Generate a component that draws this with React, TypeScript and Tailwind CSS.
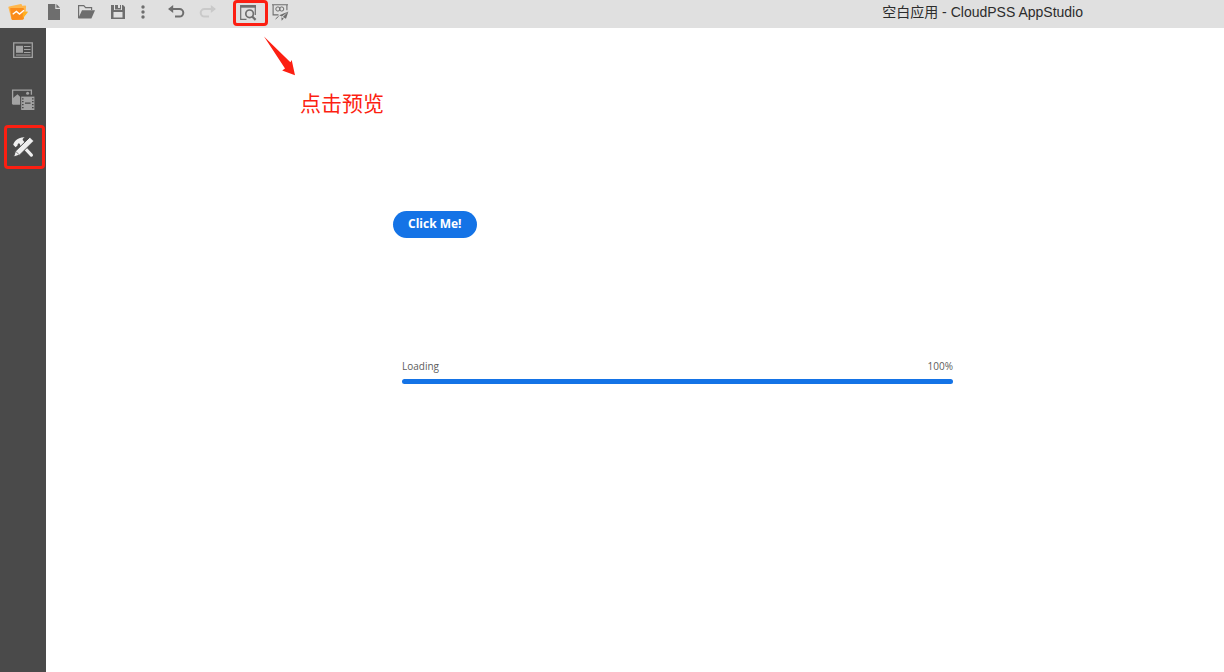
import type { ReactNode } from "react";

function Glyph({ children }: { children: ReactNode }) {
  return (
    <svg viewBox="0 0 24 24" className="size-6 shrink-0" fill="none" aria-hidden="true">
      {children}
    </svg>
  );
}

function ToolButton({
  label,
  children,
  highlighted = false,
  disabled = false,
  narrow = false,
}: {
  label: string;
  children: ReactNode;
  highlighted?: boolean;
  disabled?: boolean;
  narrow?: boolean;
}) {
  return (
    <button
      type="button"
      aria-label={label}
      disabled={disabled}
      className={`relative flex h-7 items-center justify-center ${narrow ? "w-[18px]" : "w-8"} ${
        disabled ? "text-[#c9c9c9]" : "text-[#6e6e6e]"
      }`}
    >
      <Glyph>{children}</Glyph>
      {highlighted && (
        <span className="absolute -right-1 bottom-0.5 left-px top-0 rounded-[4px] border-3 border-[#fc1f12]" />
      )}
    </button>
  );
}

function SideButton({
  label,
  children,
  highlighted = false,
}: {
  label: string;
  children: ReactNode;
  highlighted?: boolean;
}) {
  return (
    <button
      type="button"
      aria-label={label}
      aria-pressed={highlighted}
      className={`relative flex h-11 w-full items-center justify-center ${
        highlighted ? "text-[#efefef]" : "text-[#a3a3a3]"
      }`}
    >
      <Glyph>{children}</Glyph>
      {highlighted && (
        <span className="absolute -bottom-px left-1 right-px top-px rounded-[4px] border-3 border-[#fc1f12]" />
      )}
    </button>
  );
}

function Logo() {
  return (
    <a href="#" aria-label="CloudPSS" className="flex w-[38px] justify-start pl-1.5">
      <svg viewBox="0 0 24 24" className="size-6" fill="none" aria-hidden="true">
        <path d="M2.4 5.4c-.1-.5.2-.9.7-1L14.8 2c.6-.1 1 .2 1.1.7l.3 1.1 3-.4c.6 0 .9.3.9.8l-.6 8-3 5L7 18c-.7.1-1.3-.2-1.5-.8z" fill="#ffb74d" />
        <path d="M5 6h11.6c.9 0 1.4.5 1.4 1.3v8.8c0 .9-.5 1.5-1.4 1.6l-9.4.3c-.9 0-1.5-.5-1.7-1.3L4.2 7c-.1-.6.2-1 .8-1z" fill="#fb8c1c" />
        <path d="M16.8 10.2l4.2-.7c.6-.1.9.5.6.9l-4.8 6z" fill="#ffb020" />
        <path d="M6.7 12.3l3.7-2.9 3.1 2.7L18 8.3" stroke="#fff" strokeWidth="1.4" />
      </svg>
    </a>
  );
}

function Toolbar() {
  return (
    <header className="flex h-7 items-center bg-[#e0e0e0]">
      <Logo />
      <nav aria-label="工具栏" className="flex items-center">
        <ToolButton label="新建">
          <path d="M6 2h7.3v5H18v11H6z" fill="currentColor" />
          <path d="M14.4 2 18 5.7h-3.6z" fill="currentColor" />
        </ToolButton>
        <ToolButton label="打开">
          <path d="M4.6 16V3.6h5.2l1.8 2h6V8" stroke="currentColor" strokeWidth="1.2" />
          <path d="M8 8.2h13l-3.6 8.2H4.2z" fill="currentColor" />
        </ToolButton>
        <ToolButton label="保存">
          <path
            fillRule="evenodd"
            d="M5 3h3v5h8V3h1l2 2v12H5zM7.5 10v5.6h9V10z"
            fill="currentColor"
          />
          <path d="M9 3h3v4H9zM14 3h1v4h-1zM9 6h6v1.4H9z" fill="currentColor" />
        </ToolButton>
        <ToolButton label="更多" narrow>
          <circle cx="12" cy="5" r="1.7" fill="currentColor" />
          <circle cx="12" cy="10" r="1.7" fill="currentColor" />
          <circle cx="12" cy="15" r="1.7" fill="currentColor" />
        </ToolButton>
        <div className="ml-2 flex">
          <ToolButton label="撤销">
            <path d="M5 7h10.5a3.7 3.7 0 0 1 0 7.6H11" stroke="currentColor" strokeWidth="2" />
            <path d="M9.2 2.9v8.2L4 7z" fill="currentColor" />
          </ToolButton>
          <ToolButton label="重做" disabled>
            <path d="M19 7H8.5a3.7 3.7 0 0 0 0 7.6H13" stroke="currentColor" strokeWidth="2" />
            <path d="M14.8 2.9v8.2L20 7z" fill="currentColor" />
          </ToolButton>
        </div>
        <div className="ml-2 flex">
          <ToolButton label="预览" highlighted>
            <path d="M10.5 17.3H4.7V3.7h14.6V13" stroke="currentColor" strokeWidth="1.2" />
            <path d="M4.2 3.2H20v2.5H4.2z" fill="currentColor" />
            <circle cx="13.6" cy="11.8" r="3.8" stroke="currentColor" strokeWidth="1.7" />
            <path d="m16.2 14.5 3.4 3.4" stroke="currentColor" strokeWidth="2.2" />
          </ToolButton>
          <ToolButton label="发布">
            <path d="M4 2.7h16M5.1 2.6v10.3h5.4M18.9 2.6v5.6" stroke="currentColor" strokeWidth="1.1" />
            <circle cx="9.9" cy="7" r="2.1" stroke="currentColor" strokeWidth="1" />
            <circle cx="13.7" cy="7" r="2.1" stroke="currentColor" strokeWidth="1" />
            <path d="M7.6 17 10.6 14.3" stroke="currentColor" strokeWidth="1" />
            <path d="m20.4 9.6-9.2 3.6 2.6 1.3zM20.4 9.6l-5.6 5.3 3.2 1.9zM13.4 15.2l2.4 1.3-2.2 2.2z" fill="currentColor" />
          </ToolButton>
        </div>
      </nav>
      <h1 className="mr-[141px] ml-auto pb-1 text-sm leading-5 text-[#2c2c2c]">
        空白应用 - CloudPSS AppStudio
      </h1>
    </header>
  );
}

function Sidebar() {
  return (
    <aside className="flex w-[46px] shrink-0 flex-col gap-1 bg-[#4a4a4a]">
      <SideButton label="页面">
        <path d="M2.7 4.9h18.6v14.4H2.7z" stroke="currentColor" strokeWidth="1.3" />
        <path d="M5 7.8h7v7H5z" fill="currentColor" />
        <path d="M13 8.5h6.5M13 11.5h6.5M13 14.5h6.5M5 17h14.5" stroke="currentColor" strokeWidth="1.1" />
      </SideButton>
      <SideButton label="资源">
        <path d="M1.6 18V4.2h18.8v4.6" stroke="currentColor" strokeWidth="1.3" />
        <path d="M1.5 18.8v-6.3l5-4.3 3 3v7.6z" fill="currentColor" />
        <circle cx="16.6" cy="7.3" r="1.5" fill="currentColor" />
        <path d="M9.2 9.6h14.8v15H9.2z" fill="#4a4a4a" />
        <path d="M10.2 10.6h13.2V24H10.2z" fill="currentColor" />
        <path
          d="M11 12.8h1.6M11 15.6h1.6M11 18.6h1.6M11 21.6h1.6M21 12.8h1.6M21 15.6h1.6M21 18.6h1.6M21 21.6h1.6M14 17.2h5.6"
          stroke="#4a4a4a"
          strokeWidth="1.2"
        />
      </SideButton>
      <SideButton label="工具" highlighted>
        <path d="m10.6 10.7 9.8 10.4" stroke="currentColor" strokeWidth="3.2" strokeLinecap="round" />
        <path
          d="M2.2 10.7c.6-1.6 1.2-2.7 2.5-4.1C6.7 4.5 9.2 3.2 13.6 3.2c-1.4.9-2 1.6-1.9 2.8l2.6 3-3.1 3.1-3.2-2.8c-1 .1-1.5.9-1.5 2.1L4.6 13.2z"
          fill="currentColor"
        />
        <path d="M18.9 3.2 22.8 7 8.4 21.2 2.5 23 4.4 17.2z" fill="currentColor" stroke="#4a4a4a" strokeWidth="1" />
        <path d="m4.8 17.4 3.5 3.5" stroke="#4a4a4a" strokeWidth=".7" />
      </SideButton>
    </aside>
  );
}

function Canvas() {
  return (
    <main className="relative min-w-0 flex-1 bg-white">
      <svg
        viewBox="0 0 32 40"
        className="absolute left-[218px] top-2 h-10 w-8"
        fill="#fc1f12"
        aria-hidden="true"
      >
        <path d="M0 .5 26.4 26.2l1.3-2.2L31 39.3 18.2 34.4l2.8-1.9z" />
      </svg>
      <p className="absolute left-[254px] top-[62px] text-[21px] leading-7 text-[#fc1f12]">
        点击预览
      </p>
      <button
        type="button"
        className="absolute left-[347px] top-[183px] rounded-full bg-[#1473e6] px-[15px] pt-1 pb-[5px] font-['Open_Sans',sans-serif] text-[12px] leading-[18px] font-bold text-white"
      >
        Click Me!
      </button>
      <div className="absolute left-[356px] top-[330px] flex w-[551px] flex-col gap-[5px] font-['Open_Sans',sans-serif] text-[10px] leading-4 text-[#5c5c5c]">
        <div className="flex justify-between">
          <label htmlFor="loading">Loading</label>
          <span>100%</span>
        </div>
        <progress
          id="loading"
          value={100}
          max={100}
          className="h-[5px] w-full appearance-none overflow-hidden rounded-full [&::-webkit-progress-bar]:bg-[#e0e0e0] [&::-webkit-progress-value]:bg-[#1473e6]"
        />
      </div>
    </main>
  );
}

export default function App() {
  return (
    <div className="flex min-h-screen flex-col bg-white font-['Liberation_Sans','Noto_Sans_CJK_SC',sans-serif]">
      <Toolbar />
      <div className="flex flex-1">
        <Sidebar />
        <Canvas />
      </div>
    </div>
  );
}
